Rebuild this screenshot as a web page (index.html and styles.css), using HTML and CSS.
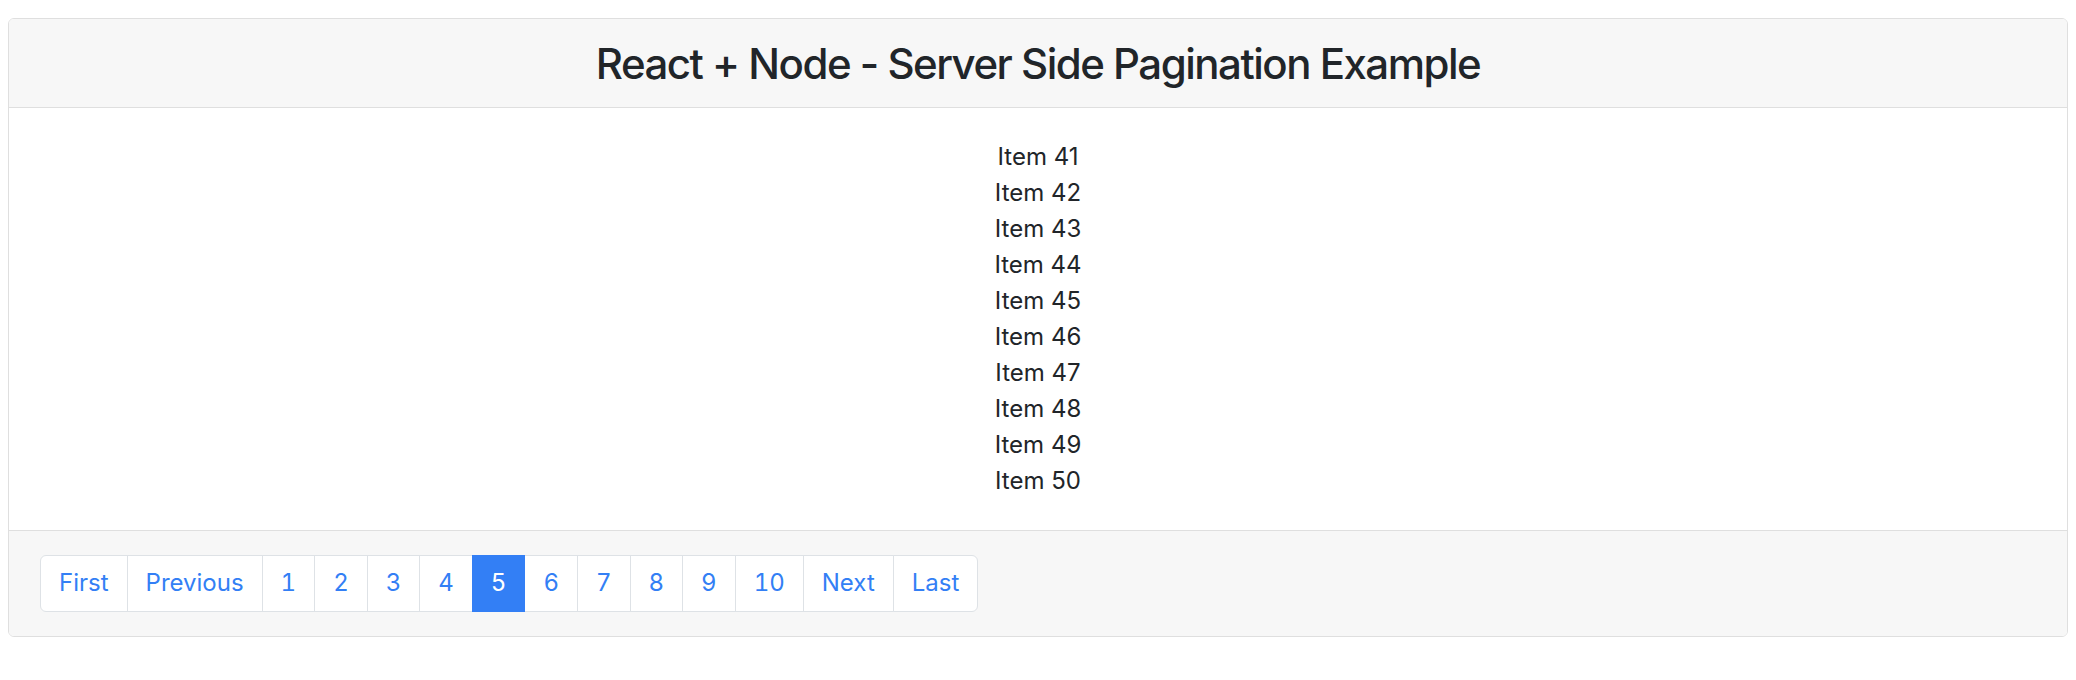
FILE: index.html
```html
<!DOCTYPE html>
<html lang="en">
<head>
<meta charset="utf-8">
<title>React + Node - Server Side Pagination Example</title>
<link rel="stylesheet" href="styles.css">
</head>
<body>
<div class="card">
  <div class="card-header">
    <h3 class="card-title">React + Node - Server Side Pagination Example</h3>
  </div>
  <div class="card-body">
    <div class="item">Item 41</div>
    <div class="item">Item 42</div>
    <div class="item">Item 43</div>
    <div class="item">Item 44</div>
    <div class="item">Item 45</div>
    <div class="item">Item 46</div>
    <div class="item">Item 47</div>
    <div class="item">Item 48</div>
    <div class="item">Item 49</div>
    <div class="item">Item 50</div>
  </div>
  <div class="card-footer">
    <ul class="pagination">
      <li class="page-item first"><a class="page-link" href="#">First</a></li>
      <li class="page-item"><a class="page-link" href="#">Previous</a></li>
      <li class="page-item"><a class="page-link" href="#">1</a></li>
      <li class="page-item"><a class="page-link" href="#">2</a></li>
      <li class="page-item"><a class="page-link" href="#">3</a></li>
      <li class="page-item"><a class="page-link" href="#">4</a></li>
      <li class="page-item active"><a class="page-link" href="#">5</a></li>
      <li class="page-item"><a class="page-link" href="#">6</a></li>
      <li class="page-item"><a class="page-link" href="#">7</a></li>
      <li class="page-item"><a class="page-link" href="#">8</a></li>
      <li class="page-item"><a class="page-link" href="#">9</a></li>
      <li class="page-item"><a class="page-link" href="#">10</a></li>
      <li class="page-item"><a class="page-link" href="#">Next</a></li>
      <li class="page-item last"><a class="page-link" href="#">Last</a></li>
    </ul>
  </div>
</div>
</body>
</html>
```

FILE: styles.css
```css
* {
  box-sizing: border-box;
}

body {
  margin: 18px 8px 8px 8px;
  font-family: Inter, "Noto Sans", sans-serif;
  font-size: 24px;
  line-height: 36px;
  color: #212529;
  background: #ffffff;
}

.card {
  display: flex;
  flex-direction: column;
  border: 1px solid #dfdfdf;
  border-radius: 6px;
  overflow: hidden;
}

.card-header {
  background: #f7f7f7;
  border-bottom: 1px solid #dfdfdf;
  padding: 19px 30px 18px;
}

.card-title {
  margin: 0;
  font-size: 42px;
  line-height: 51px;
  font-weight: 500;
  letter-spacing: -1.5px;
  text-align: center;
  color: #212529;
}

.card-body {
  padding: 31px 30px 31px;
  text-align: center;
}

.item {
  line-height: 36px;
}

.card-footer {
  background: #f7f7f7;
  border-top: 1px solid #dfdfdf;
  padding: 24px 31px;
}

.pagination {
  display: flex;
  margin: 0;
  padding: 0;
  list-style: none;
  font-variant-numeric: tabular-nums;
}

.page-item {
  margin-left: -1px;
}

.page-item.first {
  margin-left: 0;
}

.page-link {
  display: block;
  padding: 12px 18px 13px;
  line-height: 30px;
  color: #337ff5;
  text-decoration: none;
  background: #ffffff;
  border: 1px solid #dee2e6;
}

.page-item.first .page-link {
  border-radius: 6px 0 0 6px;
}

.page-item.last .page-link {
  border-radius: 0 6px 6px 0;
}

.page-item.active .page-link {
  background: #337ff5;
  border-color: #337ff5;
  color: #ffffff;
  position: relative;
  z-index: 1;
}
```
